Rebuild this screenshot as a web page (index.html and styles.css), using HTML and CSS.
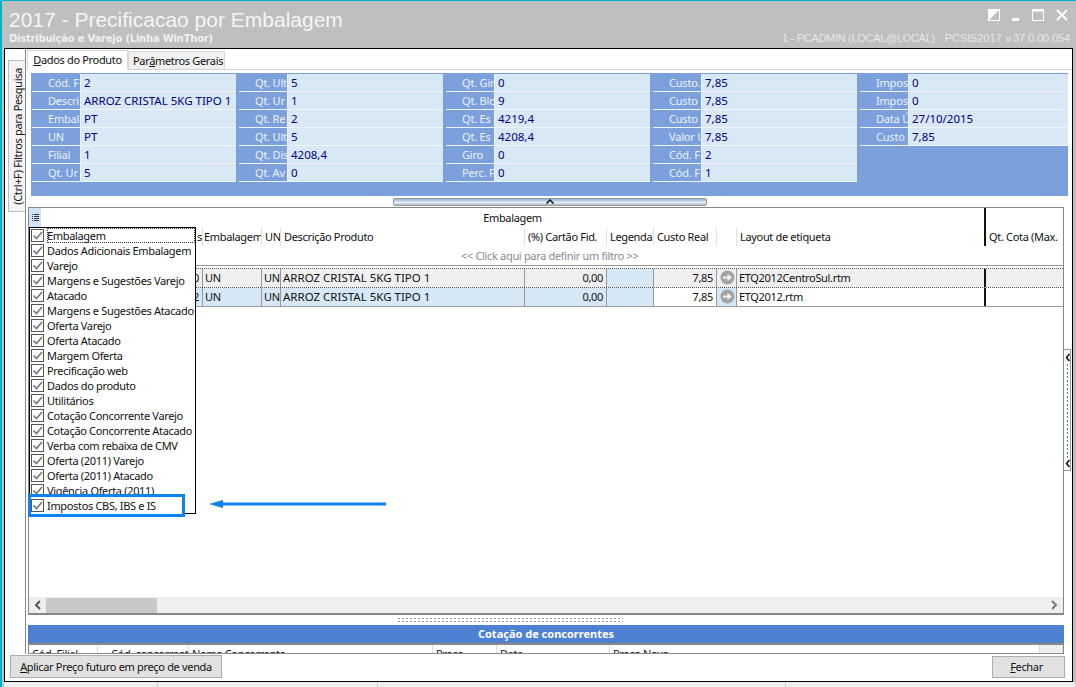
FILE: index.html
```html
<!DOCTYPE html>
<html lang="pt">
<head>
<meta charset="utf-8">
<title>Precificacao por Embalagem</title>
<link rel="stylesheet" href="styles.css">
</head>
<body>
<div class="app">
  <header class="titlebar">
    <div class="title-block">
      <div class="app-title">2017 - Precificacao por Embalagem</div>
      <div class="app-sub">Distribuição e Varejo (Linha WinThor)</div>
    </div>
    <div class="title-right">
      <div class="win-buttons">
        <svg class="win-icon" width="12" height="12" viewBox="0 0 12 12"><rect x="0.5" y="0.5" width="11" height="11" fill="none" stroke="#fff"/><path d="M0 12V0H12Z" fill="#fff"/></svg>
        <svg class="win-icon" width="8" height="12" viewBox="0 0 8 12"><rect x="0" y="9" width="7" height="3" fill="#fff"/></svg>
        <svg class="win-icon" width="12" height="12" viewBox="0 0 12 12"><rect x="0.5" y="1" width="11" height="10.5" fill="none" stroke="#fff"/><rect x="0" y="0" width="12" height="2.5" fill="#fff"/></svg>
        <svg class="win-icon" width="12" height="12" viewBox="0 0 12 12"><path d="M1 1L11 11M11 1L1 11" stroke="#fff" stroke-width="2" fill="none"/></svg>
      </div>
      <div class="session"><span>1 - PCADMIN (LOCAL@LOCAL)</span><span>PCSIS2017</span><span>v.37.0.00.054</span></div>
    </div>
  </header>

  <div class="window">
    <div class="window-body">
      <aside class="rail">
        <div class="rail-tab"><span>(Ctrl+F) Filtros para Pesquisa</span></div>
      </aside>
      <main class="main">
        <nav class="tabs">
          <div class="tab active"><u>D</u>ados do Produto</div>
          <div class="tab">Par<u>â</u>metros Gerais</div>
        </nav>

        <section class="panel">
          <div class="col">
            <div class="row"><span class="lbl">Cód. F</span><span class="val">2</span></div>
            <div class="row"><span class="lbl">Descri</span><span class="val">ARROZ CRISTAL 5KG TIPO 1</span></div>
            <div class="row"><span class="lbl">Embala</span><span class="val">PT</span></div>
            <div class="row"><span class="lbl">UN</span><span class="val">PT</span></div>
            <div class="row"><span class="lbl">Filial</span><span class="val">1</span></div>
            <div class="row"><span class="lbl">Qt. Ur</span><span class="val">5</span></div>
          </div>
          <div class="col">
            <div class="row"><span class="lbl">Qt. Ult</span><span class="val">5</span></div>
            <div class="row"><span class="lbl">Qt. Ur</span><span class="val">1</span></div>
            <div class="row"><span class="lbl">Qt. Re</span><span class="val">2</span></div>
            <div class="row"><span class="lbl">Qt. Ult</span><span class="val">5</span></div>
            <div class="row"><span class="lbl">Qt. Dis</span><span class="val">4208,4</span></div>
            <div class="row"><span class="lbl">Qt. Av</span><span class="val">0</span></div>
          </div>
          <div class="col">
            <div class="row"><span class="lbl">Qt. Gir</span><span class="val">0</span></div>
            <div class="row"><span class="lbl">Qt. Blo</span><span class="val">9</span></div>
            <div class="row"><span class="lbl">Qt. Es</span><span class="val">4219,4</span></div>
            <div class="row"><span class="lbl">Qt. Es</span><span class="val">4208,4</span></div>
            <div class="row"><span class="lbl">Giro</span><span class="val">0</span></div>
            <div class="row"><span class="lbl">Perc. F</span><span class="val">0</span></div>
          </div>
          <div class="col">
            <div class="row"><span class="lbl">Custo.</span><span class="val">7,85</span></div>
            <div class="row"><span class="lbl">Custo</span><span class="val">7,85</span></div>
            <div class="row"><span class="lbl">Custo</span><span class="val">7,85</span></div>
            <div class="row"><span class="lbl">Valor U</span><span class="val">7,85</span></div>
            <div class="row"><span class="lbl">Cód. F</span><span class="val">2</span></div>
            <div class="row"><span class="lbl">Cód. F</span><span class="val">1</span></div>
          </div>
          <div class="col col-wide">
            <div class="row"><span class="lbl">Impost</span><span class="val">0</span></div>
            <div class="row"><span class="lbl">Impost</span><span class="val">0</span></div>
            <div class="row"><span class="lbl">Data Ú</span><span class="val">27/10/2015</span></div>
            <div class="row"><span class="lbl">Custo</span><span class="val">7,85</span></div>
          </div>
        </section>

        <div class="splitter">
          <div class="split-btn">
            <svg width="8" height="5" viewBox="0 0 8 5"><path d="M0.5 4.5L4 1L7.500 4.500" fill="none" stroke="#111" stroke-width="1.500"/></svg>
          </div>
        </div>

        <div class="grid-row">
          <section class="grid">
            <div class="band">
              <div class="band-icon">
                <svg width="9" height="10" viewBox="0 0 9 10"><path d="M1 1.500h1M3 1.500h5M1 3.500h1M3 3.500h5M1 5.500h1M3 5.500h5M1 7.500h1M3 7.500h5" stroke="#334" stroke-width="1" fill="none"/></svg>
              </div>
              <div class="band-title">Embalagem</div>
              <div class="band-rest"></div>
            </div>
            <div class="cols head">
              <span class="end">s</span><span class="tight">Embalagem</span><span>UN</span><span>Descrição Produto</span><span>(%) Cartão Fid.</span><span>Legenda</span><span>Custo Real</span><span></span><span class="pad">Layout de etiqueta</span><span class="heavy">Qt. Cota (Max.</span>
            </div>
            <div class="filter">&lt;&lt; Click aqui para definir um filtro &gt;&gt;</div>
            <div class="body">
              <div class="cols data current">
                <span class="end">0</span><span>UN</span><span>UN</span><span class="caps">ARROZ CRISTAL 5KG TIPO 1</span><span class="end">0,00</span><span class="pale"></span><span class="end">7,85</span>
                <span class="ic">
                  <svg width="15" height="15" viewBox="0 0 15 15"><circle cx="7.500" cy="7.500" r="7" fill="#a4a4a4"/><path d="M3 6.500h4.500V4L12 7.500 7.500 11V8.500H3Z" fill="#f4f4f4"/></svg>
                </span>
                <span>ETQ2012CentroSul.rtm</span><span class="heavy"></span>
              </div>
              <div class="cols data alt">
                <span class="end pale">2</span><span class="pale">UN</span><span class="pale">UN</span><span class="pale caps">ARROZ CRISTAL 5KG TIPO 1</span><span class="end pale">0,00</span><span class="pale"></span><span class="end">7,85</span>
                <span class="ic pale">
                  <svg width="15" height="15" viewBox="0 0 15 15"><circle cx="7.500" cy="7.500" r="7" fill="#a4a4a4"/><path d="M3 6.500h4.500V4L12 7.500 7.500 11V8.500H3Z" fill="#f4f4f4"/></svg>
                </span>
                <span>ETQ2012.rtm</span><span class="heavy"></span>
              </div>
            </div>
            <div class="hscroll">
              <svg class="arrow-l" width="8" height="10" viewBox="0 0 8 10"><path d="M6 1L2 5l4 4" fill="none" stroke="#555" stroke-width="2"/></svg>
              <div class="thumb"></div>
              <div class="track"></div>
              <svg class="arrow-r" width="8" height="10" viewBox="0 0 8 10"><path d="M2 1l4 4-4 4" fill="none" stroke="#777" stroke-width="2"/></svg>
            </div>

            <ul class="menu">
              <li class="item focus"><span class="chk"><svg width="11" height="11" viewBox="0 0 11 11"><path d="M1.500 5.500L4.500 8.500 10 2" fill="none" stroke="#777" stroke-width="1.600"/></svg></span><span class="txt">Embalagem</span></li>
              <li class="item"><span class="chk"><svg width="11" height="11" viewBox="0 0 11 11"><path d="M1.500 5.500L4.500 8.500 10 2" fill="none" stroke="#777" stroke-width="1.600"/></svg></span><span class="txt">Dados Adicionais Embalagem</span></li>
              <li class="item"><span class="chk"><svg width="11" height="11" viewBox="0 0 11 11"><path d="M1.500 5.500L4.500 8.500 10 2" fill="none" stroke="#777" stroke-width="1.600"/></svg></span><span class="txt">Varejo</span></li>
              <li class="item"><span class="chk"><svg width="11" height="11" viewBox="0 0 11 11"><path d="M1.500 5.500L4.500 8.500 10 2" fill="none" stroke="#777" stroke-width="1.600"/></svg></span><span class="txt">Margens e Sugestões Varejo</span></li>
              <li class="item"><span class="chk"><svg width="11" height="11" viewBox="0 0 11 11"><path d="M1.500 5.500L4.500 8.500 10 2" fill="none" stroke="#777" stroke-width="1.600"/></svg></span><span class="txt">Atacado</span></li>
              <li class="item"><span class="chk"><svg width="11" height="11" viewBox="0 0 11 11"><path d="M1.500 5.500L4.500 8.500 10 2" fill="none" stroke="#777" stroke-width="1.600"/></svg></span><span class="txt">Margens e Sugestões Atacado</span></li>
              <li class="item"><span class="chk"><svg width="11" height="11" viewBox="0 0 11 11"><path d="M1.500 5.500L4.500 8.500 10 2" fill="none" stroke="#777" stroke-width="1.600"/></svg></span><span class="txt">Oferta Varejo</span></li>
              <li class="item"><span class="chk"><svg width="11" height="11" viewBox="0 0 11 11"><path d="M1.500 5.500L4.500 8.500 10 2" fill="none" stroke="#777" stroke-width="1.600"/></svg></span><span class="txt">Oferta Atacado</span></li>
              <li class="item"><span class="chk"><svg width="11" height="11" viewBox="0 0 11 11"><path d="M1.500 5.500L4.500 8.500 10 2" fill="none" stroke="#777" stroke-width="1.600"/></svg></span><span class="txt">Margem Oferta</span></li>
              <li class="item"><span class="chk"><svg width="11" height="11" viewBox="0 0 11 11"><path d="M1.500 5.500L4.500 8.500 10 2" fill="none" stroke="#777" stroke-width="1.600"/></svg></span><span class="txt">Precificação web</span></li>
              <li class="item"><span class="chk"><svg width="11" height="11" viewBox="0 0 11 11"><path d="M1.500 5.500L4.500 8.500 10 2" fill="none" stroke="#777" stroke-width="1.600"/></svg></span><span class="txt">Dados do produto</span></li>
              <li class="item"><span class="chk"><svg width="11" height="11" viewBox="0 0 11 11"><path d="M1.500 5.500L4.500 8.500 10 2" fill="none" stroke="#777" stroke-width="1.600"/></svg></span><span class="txt">Utilitários</span></li>
              <li class="item"><span class="chk"><svg width="11" height="11" viewBox="0 0 11 11"><path d="M1.500 5.500L4.500 8.500 10 2" fill="none" stroke="#777" stroke-width="1.600"/></svg></span><span class="txt">Cotação Concorrente Varejo</span></li>
              <li class="item"><span class="chk"><svg width="11" height="11" viewBox="0 0 11 11"><path d="M1.500 5.500L4.500 8.500 10 2" fill="none" stroke="#777" stroke-width="1.600"/></svg></span><span class="txt">Cotação Concorrente Atacado</span></li>
              <li class="item"><span class="chk"><svg width="11" height="11" viewBox="0 0 11 11"><path d="M1.500 5.500L4.500 8.500 10 2" fill="none" stroke="#777" stroke-width="1.600"/></svg></span><span class="txt">Verba com rebaixa de CMV</span></li>
              <li class="item"><span class="chk"><svg width="11" height="11" viewBox="0 0 11 11"><path d="M1.500 5.500L4.500 8.500 10 2" fill="none" stroke="#777" stroke-width="1.600"/></svg></span><span class="txt">Oferta (2011) Varejo</span></li>
              <li class="item"><span class="chk"><svg width="11" height="11" viewBox="0 0 11 11"><path d="M1.500 5.500L4.500 8.500 10 2" fill="none" stroke="#777" stroke-width="1.600"/></svg></span><span class="txt">Oferta (2011) Atacado</span></li>
              <li class="item"><span class="chk"><svg width="11" height="11" viewBox="0 0 11 11"><path d="M1.500 5.500L4.500 8.500 10 2" fill="none" stroke="#777" stroke-width="1.600"/></svg></span><span class="txt">Vigência Oferta (2011)</span></li>
              <li class="item callout"><span class="chk"><svg width="11" height="11" viewBox="0 0 11 11"><path d="M1.500 5.500L4.500 8.500 10 2" fill="none" stroke="#777" stroke-width="1.600"/></svg></span><span class="txt">Impostos CBS, IBS e IS</span></li>
            </ul>
            <svg class="pointer" width="178" height="10" viewBox="0 0 178 10"><path d="M0 5L14 1V3.500H177V6.500H14V9Z" fill="#0a84f0"/></svg>
          </section>
          <div class="side-strip">
            <div class="side-handle">
              <svg width="6" height="9" viewBox="0 0 6 9"><path d="M4.500 1L1.500 4.500l3 3.500" fill="none" stroke="#111" stroke-width="1.600"/></svg>
              <div class="side-dots"></div>
              <svg width="6" height="9" viewBox="0 0 6 9"><path d="M4.500 1L1.500 4.500l3 3.500" fill="none" stroke="#111" stroke-width="1.600"/></svg>
            </div>
          </div>
        </div>

        <div class="splitter-low"><div class="dots"></div></div>
        <div class="bluebar">Cotação de concorrentes</div>
        <div class="grid2">
          <span class="g2a">Cód. Filial</span><span class="g2b">Cód. concorrente</span><span class="g2c">Nome Concorrente</span><span class="g2d">Preço</span><span class="g2e">Data</span><span class="g2f">Preço Novo</span><span class="g2g"></span>
        </div>
      </main>
    </div>
    <footer class="footer">
      <button class="btn btn-wide" type="button"><u>A</u>plicar Preço futuro em preço de venda</button>
      <button class="btn btn-close" type="button"><u>F</u>echar</button>
    </footer>
  </div>

  <div class="statusbar"><span class="s1"></span><span class="s2"></span><span class="s3"></span><span class="s4"></span></div>
</div>
</body>
</html>
```

FILE: styles.css
```css
* { box-sizing: border-box; }
html, body { margin: 0; padding: 0; overflow: hidden; }
body { font-family: "Noto Sans", "Liberation Sans", sans-serif; font-size: 11px; letter-spacing: -0.33px; color: #111; }
u { text-underline-offset: 1px; }

.app { width: 1076px; height: 687px; background: #bfbfbf; border-top: 1px solid #00b4cc; border-left: 2px solid #00b4cc; display: flex; flex-direction: column; }

/* title */
.titlebar { height: 47px; display: flex; justify-content: space-between; flex: none; }
.title-block { padding: 7px 0 0 7px; }
.app-title { font-family: "Liberation Sans", sans-serif; font-size: 21px; line-height: 24px; color: #f6f6f6; letter-spacing: 0; white-space: nowrap; }
.app-sub { font-family: "DejaVu Sans", sans-serif; font-weight: bold; font-size: 10px; line-height: 13px; color: #f0f0f0; letter-spacing: -0.22px; white-space: nowrap; }
.title-right { display: flex; flex-direction: column; align-items: flex-end; padding-right: 6px; }
.win-buttons { display: flex; padding: 8px 2px 0 0; height: 31px; }
.win-icon { margin-left: 12px; }
.session { font-family: "Liberation Sans", sans-serif; font-size: 11px; line-height: 13px; color: #e8e8e8; letter-spacing: -0.1px; white-space: nowrap; display: flex; gap: 4px; }
.session span:first-child { letter-spacing: -0.3px; margin-right: 6px; }

/* window */
.window { margin-left: 2px; width: 1069px; height: 634px; flex: none; background: #fff; border: 1px solid #000; display: flex; flex-direction: column; }
.window-body { height: 605px; flex: none; display: flex; }
.rail { width: 21px; flex: none; padding: 11px 0 0 3px; border-right: 1px solid #888; position: relative; }
.rail-tab { width: 17px; height: 152px; padding-left: 2px; border: 1px solid #bbb; border-right: 0; background: #f4f4f4; display: flex; align-items: center; justify-content: center; margin-right: -1px; position: relative; }
.rail-tab span { writing-mode: vertical-rl; transform: rotate(180deg); white-space: nowrap; font-size: 11px; line-height: 14px; }
.main { width: 1046px; flex: none; display: flex; flex-direction: column; overflow: hidden; }

/* tabs */
.tabs { height: 21px; display: flex; align-items: flex-end; border-bottom: 1px solid #d4d4d4; padding-left: 1px; flex: none; }
.tab { height: 18px; line-height: 17px; padding: 0 4px; background: #f0f0f0; border: 1px solid #d8d8d8; border-bottom: 0; width: 97px; text-align: center; white-space: nowrap; }
.tab.active { height: 20px; line-height: 17px; width: 101px; background: #fff; border-bottom: 1px solid #fff; margin-bottom: -1px; }

/* data panel */
.panel { margin: 3px 0 0 5px; width: 1037px; height: 123px; padding: 1px 0 0 1px; background: #7ba0dc; display: flex; gap: 3px; flex: none; align-items: flex-start; }
.col { width: 204px; flex: none; }
.col-wide { width: 208px; }
.row { height: 18px; display: flex; border-bottom: 1px solid #edf4fb; }
.lbl { width: 49px; flex: none; background: #7ba0dc; color: #eef3fb; padding: 0 1px 0 16px; border-right: 1px solid #edf4fb; line-height: 18px; overflow: hidden; white-space: nowrap; letter-spacing: -0.2px; }
.val { flex: 1; background: #d8e8f5; color: #000080; padding-left: 3px; line-height: 18px; font-size: 11.5px; letter-spacing: 0; white-space: nowrap; overflow: hidden; }

/* splitters */
.splitter { height: 11px; flex: none; display: flex; justify-content: center; padding: 2px 0 0; }
.split-btn { width: 314px; height: 8px; margin-left: 2px; border: 1px solid #999; border-radius: 2px; background: linear-gradient(#8fb4d4, #e8f0f6 60%, #a8b8c4); display: flex; justify-content: center; overflow: hidden; }

/* main grid */
.grid-row { height: 408px; flex: none; display: flex; padding-left: 2px; }
.grid { width: 1036px; height: 408px; flex: none; border: 1px solid #888; border-bottom-width: 2px; position: relative; display: flex; flex-direction: column; }
.band { height: 20px; display: flex; flex: none; }
.band-icon { width: 12px; background: #cfe3f5; display: flex; align-items: center; justify-content: center; }
.band-title { width: 943px; text-align: center; line-height: 19px; }
.band-rest { flex: 1; border-left: 2px solid #111; }
.cols { display: grid; grid-template-columns: 174px 59px 19px 244px 82px 47px 63px 20px 247px 78px; flex: none; }
.cols > span { white-space: nowrap; overflow: hidden; }
.head { height: 18px; line-height: 17px; }
.head > span { border-right: 1px solid #e2e2e2; padding-left: 3px; }
.head > span:last-child { border-right: 0; }
.head .end { text-align: right; }
.head .tight { padding-left: 1px; }
.head .pad { padding-left: 3px; }
.heavy { border-left: 2px solid #111; padding-left: 2px; }
.head > span:nth-child(9) { border-right: 0; }
.filter { height: 20px; flex: none; border-bottom: 1px solid #999; color: #8a8a8a; line-height: 19px; padding-left: 432px; }
.body { flex: 1; padding-top: 2px; }
.data { height: 19px; line-height: 18px; }
.data > span { border-right: 1px solid #999; padding-left: 2px; padding-right: 3px; }
.data > span:nth-child(9) { border-right: 0; }
.data > span:last-child { border-right: 0; }
.data .end { text-align: right; }
.data .caps { font-size: 11.5px; letter-spacing: 0; }
.current { background: #efefef; border-top: 1px dotted #555; border-bottom: 1px dotted #555; height: 20px; }
.alt { border-bottom: 1px solid #999; }
.pale { background: #d6e8f5; }
.data .ic { padding: 1px 0 0 3px; display: flex; }

/* scrollbar */
.hscroll { height: 16px; flex: none; background: #efefef; display: flex; align-items: center; }
.arrow-l { width: 8px; margin: 0 5px; flex: none; }
.thumb { width: 111px; height: 15px; background: #c8c8c8; flex: none; margin-left: -1px; }
.track { flex: 1; }
.arrow-r { margin-right: 5px; flex: none; }

/* column chooser */
.menu { position: absolute; left: 0; top: 19px; width: 167px; height: 287px; margin: 0; padding: 0 0 0 1px; list-style: none; background: #fff; border: 1px solid #000; }
.item { height: 15px; display: flex; align-items: center; line-height: 15px; white-space: nowrap; }
.chk { width: 13px; height: 13px; margin: 0 3px 0 0; border: 1px solid #555; background: #fff; flex: none; display: flex; }
.focus .txt { flex: 1; outline: 1px dotted #333; outline-offset: -1px; }
.callout { position: relative; z-index: 1; }
.callout::before { content: ""; box-sizing: border-box; position: absolute; z-index: -1; left: -3px; top: -4px; width: 157px; height: 23px; background: #fff; border: 3px solid #0a84f0; }
.pointer { position: absolute; left: 180px; top: 291px; }

/* side handle */
.side-strip { width: 7px; flex: none; padding-top: 142px; }
.side-handle { width: 7px; height: 122px; border-right: 1px solid #999; border-top: 1px solid #999; border-bottom: 1px solid #999; padding: 3px 0 2px 1px; display: flex; flex-direction: column; align-items: flex-start; justify-content: space-between; }
.side-dots { margin-left: 2px; width: 1px; height: 94px; background-image: linear-gradient(#2a86cc 50%, transparent 50%); background-size: 1px 4px; }

/* lower grid */
.splitter-low { height: 10px; flex: none; padding: 2px 0 0 371px; }
.dots { width: 226px; height: 5px; background-image: radial-gradient(circle, #999 1px, transparent 1px); background-size: 4px 3px; }
.bluebar { height: 18px; margin-left: 2px; flex: none; background: #4f81d3; color: #fff; font-weight: bold; text-align: center; letter-spacing: 0; line-height: 17px; width: 1036px; }
.grid2 { height: 11px; margin-left: 2px; width: 1036px; flex: none; border-top: 2px solid #888; border-left: 1px solid #888; border-right: 1px solid #888; border-bottom: 1px solid #888; display: flex; overflow: hidden; line-height: 18px; }
.grid2 > span { border-right: 1px solid #ddd; padding-left: 3px; white-space: nowrap; overflow: hidden; height: 18px; }
.g2a { width: 69px; padding-left: 4px; }
.g2b { width: 91px; padding-left: 13px !important; }
.g2c { width: 244px; }
.g2d { width: 64px; }
.g2e { width: 113px; }
.g2f { width: 430px; }
.g2g { flex: 1; background: #efefef; border-right: 0; }

/* footer */
.footer { flex: 1; display: flex; justify-content: space-between; padding: 1px 7px 0 5px; }
.btn { font: inherit; letter-spacing: -0.33px; height: 23px; background: #e1e1e1; border: 1px solid #adadad; color: #111; padding: 0 0 1px; white-space: nowrap; }
.btn-wide { width: 212px; }
.btn-close { width: 73px; margin-top: 1px; height: 22px; padding-right: 4px; }

/* status */
.statusbar { flex: 1; margin-left: 2px; background: #efefef; display: flex; }
.statusbar span { border-right: 1px solid #d0d0d0; }
.s1 { width: 154px; }
.s2 { width: 220px; }
.s3 { width: 408px; }
.s4 { flex: 1; border-right: 0; }
```
